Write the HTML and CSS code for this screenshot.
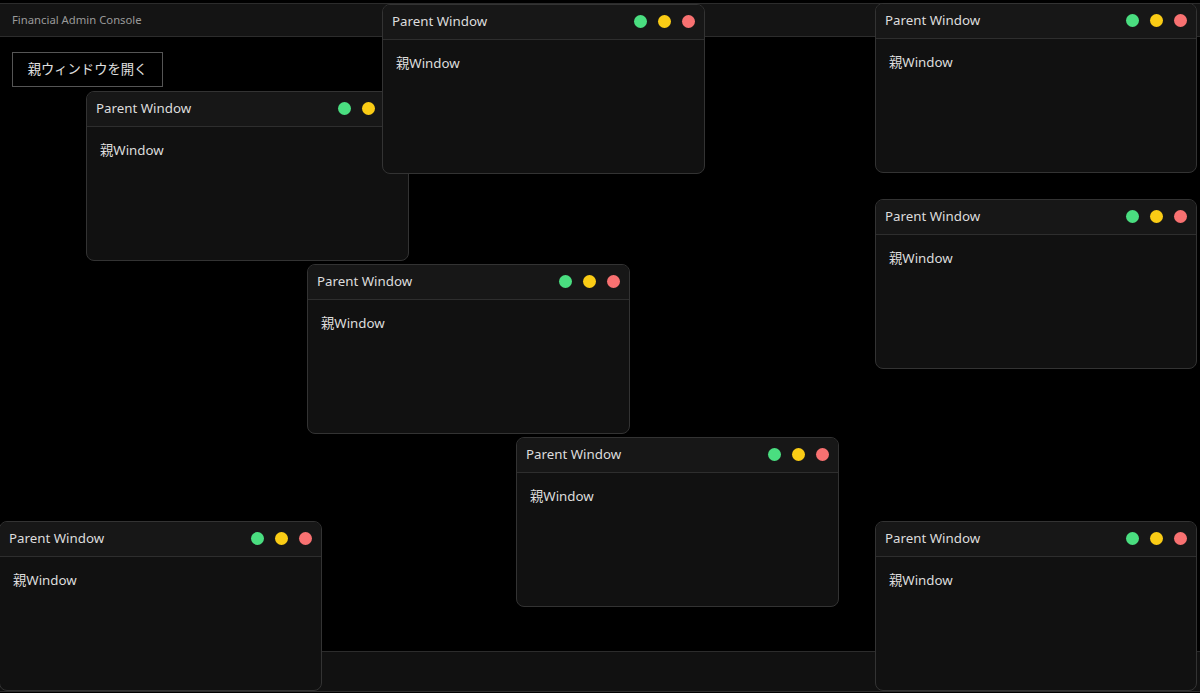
FILE: index.html
```html
<!DOCTYPE html>
<html lang="ja">
<head>
<meta charset="utf-8">
<title>Financial Admin Console</title>
<link rel="stylesheet" href="styles.css">
</head>
<body>
<div class="app">
  <header class="topbar">Financial Admin Console</header>
  <main class="desktop">
    <button class="open-btn">親ウィンドウを開く</button>

    <section class="win w1">
      <div class="win-title"><span>Parent Window</span><div class="dots"><i class="dot g"></i><i class="dot y"></i><i class="dot r"></i></div></div>
      <div class="win-body">親Window</div>
    </section>
    <section class="win w2">
      <div class="win-title"><span>Parent Window</span><div class="dots"><i class="dot g"></i><i class="dot y"></i><i class="dot r"></i></div></div>
      <div class="win-body">親Window</div>
    </section>
    <section class="win w3">
      <div class="win-title"><span>Parent Window</span><div class="dots"><i class="dot g"></i><i class="dot y"></i><i class="dot r"></i></div></div>
      <div class="win-body">親Window</div>
    </section>
    <section class="win w4">
      <div class="win-title"><span>Parent Window</span><div class="dots"><i class="dot g"></i><i class="dot y"></i><i class="dot r"></i></div></div>
      <div class="win-body">親Window</div>
    </section>
    <section class="win w5">
      <div class="win-title"><span>Parent Window</span><div class="dots"><i class="dot g"></i><i class="dot y"></i><i class="dot r"></i></div></div>
      <div class="win-body">親Window</div>
    </section>
    <section class="win w6">
      <div class="win-title"><span>Parent Window</span><div class="dots"><i class="dot g"></i><i class="dot y"></i><i class="dot r"></i></div></div>
      <div class="win-body">親Window</div>
    </section>
    <section class="win w7">
      <div class="win-title"><span>Parent Window</span><div class="dots"><i class="dot g"></i><i class="dot y"></i><i class="dot r"></i></div></div>
      <div class="win-body">親Window</div>
    </section>
    <section class="win w8">
      <div class="win-title"><span>Parent Window</span><div class="dots"><i class="dot g"></i><i class="dot y"></i><i class="dot r"></i></div></div>
      <div class="win-body">親Window</div>
    </section>
  </main>
  <footer class="footer"></footer>
</div>
</body>
</html>
```

FILE: styles.css
```css
* { box-sizing: border-box; }
html, body {
  margin: 0;
  padding: 0;
  background: #000;
  height: 100%;
  overflow: hidden;
}
body {
  font-family: "Noto Sans", "Noto Sans CJK JP", sans-serif;
  color: #ddd;
}
.app {
  position: relative;
  height: 693px;
  display: flex;
  flex-direction: column;
  padding-top: 3px;
  padding-bottom: 1px;
}
.topbar {
  height: 34px;
  background: #141414;
  border-top: 1px solid #2c2c2c;
  border-bottom: 1px solid #2c2c2c;
  font-size: 11.3px;
  color: #9a9a9a;
  padding: 0 12px 2px;
  display: flex;
  align-items: center;
}
.desktop {
  flex: 1;
  padding: 15px 12px;
}
.open-btn {
  font-family: "Noto Sans CJK JP", "Noto Sans", sans-serif;
  font-size: 13.3px;
  color: #e0e0e0;
  background: #000;
  border: 1px solid #555;
  height: 35px;
  width: 151px;
  padding: 0 0 3px;
}
.footer {
  height: 41px;
  background: #111;
  border-top: 1px solid #2c2c2c;
  border-bottom: 1px solid #2c2c2c;
}
.win {
  position: absolute;
  width: 323px;
  height: 170px;
  background: #111;
  border: 1px solid #333;
  border-radius: 8px;
  overflow: hidden;
  z-index: 2;
}
.win-title {
  height: 35px;
  background: #171717;
  border-bottom: 1px solid #2e2e2e;
  display: flex;
  align-items: center;
  justify-content: space-between;
  padding: 0 9px 2px 9px;
  font-size: 13.3px;
  color: #ddd;
}
.dots {
  display: flex;
  gap: 11px;
  margin-top: 1px;
}
.dot {
  width: 13px;
  height: 13px;
  border-radius: 50%;
  display: block;
}
.dot.g { background: #4ade80; }
.dot.y { background: #facc15; }
.dot.r { background: #f87171; }
.win-body {
  padding: 13px 13px;
  font-size: 13.3px;
  line-height: 20px;
  color: #ddd;
}
.w1 { left: 86px; top: 91px; }
.w2 { left: 382px; top: 4px; }
.w3 { left: 875px; top: 3px; width: 322px; }
.w4 { left: 875px; top: 199px; width: 322px; }
.w5 { left: 307px; top: 264px; }
.w6 { left: 516px; top: 437px; }
.w7 { left: -1px; top: 521px; }
.w8 { left: 875px; top: 521px; width: 322px; }
```
